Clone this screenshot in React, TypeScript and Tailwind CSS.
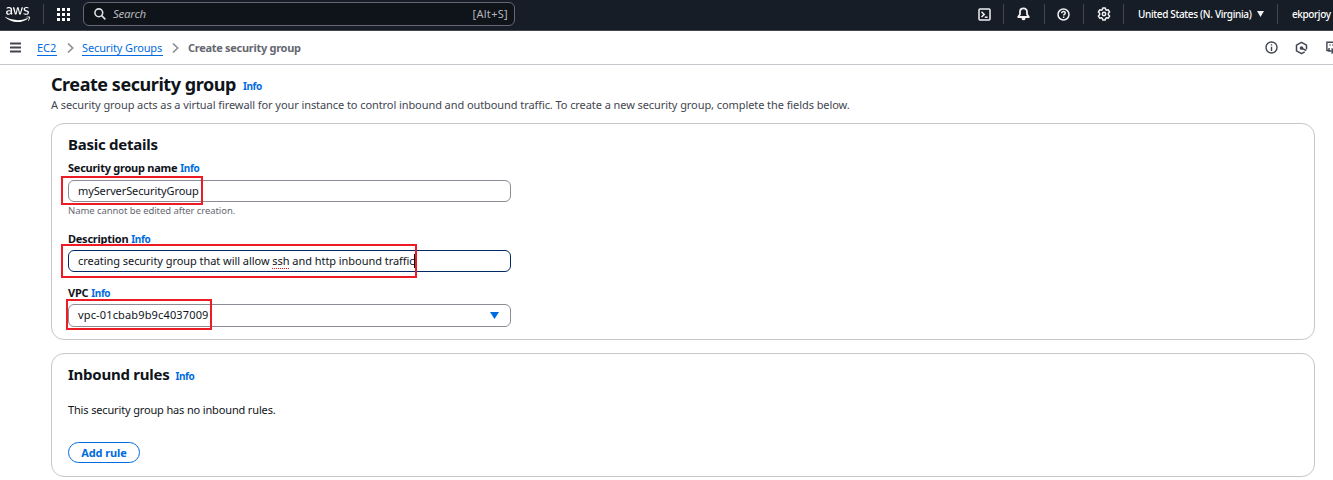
import type { ReactNode } from 'react';
import { FaAws } from 'react-icons/fa';

function Separator() {
  return <div className="h-[20px] w-px shrink-0 bg-[#424650]" />;
}

function Info() {
  return <a className="text-[10px] font-bold leading-[14px] tracking-[-0.4px] text-[#006ce0]">Info</a>;
}

function Chevron() {
  return (
    <svg className="h-[10px] w-[7px] shrink-0" viewBox="0 0 7 10" fill="none" stroke="#8c8c94" strokeWidth="1.6">
      <path d="M1 .5 5.7 5 1 9.5" />
    </svg>
  );
}

function Label({ children }: { children: ReactNode }) {
  return (
    <div className="flex h-[14px] items-center gap-[3px] whitespace-nowrap text-[11px] font-bold leading-[14px] tracking-[-0.25px]">
      <span>{children}</span>
      <Info />
    </div>
  );
}

function Mark({ className }: { className: string }) {
  return <div className={`pointer-events-none absolute border-2 border-[#ed1c24] ${className}`} />;
}

function TerminalIcon() {
  return (
    <svg className="h-[13px] w-[13px]" viewBox="0 0 13 13" fill="none" stroke="#f0f0f3" strokeWidth="1.5">
      <rect x="1" y="1" width="11" height="11" rx="1" />
      <path d="m3.5 3.8 2.7 2.6-2.7 2.6M6.8 9.3h2.8" />
    </svg>
  );
}

function BellIcon() {
  return (
    <svg className="h-[14px] w-[13px]" viewBox="0 0 13 14" fill="none" stroke="#f0f0f3" strokeWidth="1.8" strokeLinejoin="round">
      <path d="M6.5 1.4C4.400 1.400 3 2.800 3 4.700v2.500L1.200 10h10.600L10 7.200V4.700C10 2.800 8.600 1.400 6.500 1.400Z" />
      <path d="M4.600 10.500h3.800v.9a1.900 1.900 0 0 1-3.800 0Z" fill="#f0f0f3" stroke="none" />
    </svg>
  );
}

function HelpIcon() {
  return (
    <svg className="h-[13px] w-[13px]" viewBox="0 0 13 13" fill="none" stroke="#f0f0f3" strokeWidth="1.5">
      <circle cx="6.500" cy="6.500" r="5.500" />
      <path d="M4.700 5.300c0-1 .7-1.700 1.800-1.700s1.800.6 1.800 1.500c0 1.200-1.700 1.200-1.700 2.400" />
      <path d="M6.600 8.500v1.400" />
    </svg>
  );
}

function GearIcon() {
  return (
    <svg className="h-[14px] w-[14px]" viewBox="0 0 14 14" fill="none" stroke="#f0f0f3" strokeWidth="1.500" strokeLinejoin="round">
      <path d="M5.700 1.100h2.600l.4 1.600 1 .6 1.600-.5 1.300 2.200-1.200 1.200v1.600l1.200 1.200-1.300 2.200-1.600-.5-1 .6-.4 1.600H5.700l-.4-1.600-1-.6-1.600.5L1.400 9l1.200-1.200V6.200L1.400 5l1.300-2.200 1.600.5 1-.6Z" />
      <circle cx="7" cy="7" r="1.700" />
    </svg>
  );
}

function Header() {
  return (
    <header className="flex h-[31px] items-center whitespace-nowrap border-b border-[#424650] bg-[#161d26] pb-[2px] text-white">
      <FaAws className="ml-[5px] mt-px h-[25px] w-[25px] shrink-0" />
      <div className="ml-[13px]">
        <Separator />
      </div>
      <svg className="ml-[13px] h-[13px] w-[13px] shrink-0" viewBox="0 0 13 13" fill="#fff">
        {[0, 5, 10].map((y) => [0, 5, 10].map((x) => <rect key={`${x}-${y}`} x={x} y={y} width="3" height="3" />))}
      </svg>
      <div className="ml-[13px] flex h-[24px] w-[432px] shrink-0 items-center rounded-[6px] border border-[#656871] bg-[#0f141a] px-[10px] text-[#b4b4bb]">
        <svg className="h-[12px] w-[12px]" viewBox="0 0 12 12" fill="none" stroke="#dedee3" strokeWidth="1.6">
          <circle cx="4.8" cy="4.8" r="3.9" />
          <path d="m7.6 7.6 3.8 3.8" />
        </svg>
        <span className="ml-[7px] text-[11.5px] italic tracking-[-0.25px]">Search</span>
        <span className="-mr-[4px] ml-auto text-[11px] tracking-[0.3px]">[Alt+S]</span>
      </div>
      <div className="ml-auto flex w-[356px] shrink-0 items-center">
        <div className="flex w-[26px] items-center pl-px">
          <TerminalIcon />
        </div>
        <Separator />
        <div className="flex w-[40px] items-center justify-center pr-px">
          <BellIcon />
        </div>
        <Separator />
        <div className="flex w-[38px] items-center justify-center pr-px">
          <HelpIcon />
        </div>
        <Separator />
        <div className="flex w-[39px] items-center justify-center pl-px">
          <GearIcon />
        </div>
        <Separator />
        <div className="flex w-[153px] items-center pl-[14px]">
          <span className="text-[10px] font-medium tracking-[-0.34px]">United States (N. Virginia)</span>
          <svg className="ml-[5px] h-[6px] w-[7px]" viewBox="0 0 7 6" fill="#f0f0f3">
            <path d="M0 0h7L3.500 6Z" />
          </svg>
        </div>
        <Separator />
        <span className="ml-[14px] text-[10px] font-medium tracking-[-0.4px]">ekporjoy</span>
      </div>
    </header>
  );
}

function Breadcrumbs() {
  return (
    <nav className="flex h-[34px] items-center whitespace-nowrap border-b border-[#c6c6cd] pl-[10px]">
      <svg className="h-[12px] w-[11px] shrink-0" viewBox="0 0 11 12" fill="#424650">
        <path d="M0 .6h11v1.800H0zM0 4.600h11v1.800H0zM0 8.600h11v1.800H0z" />
      </svg>
      <a className="ml-[16px] mt-px w-[20px] border-b border-[#006ce0] leading-[14px] text-[#006ce0]">EC2</a>
      <div className="ml-[10px] mr-[8px]">
        <Chevron />
      </div>
      <a className="mt-px w-[81px] border-b border-[#006ce0] leading-[14px] tracking-[-0.12px] text-[#006ce0]">Security Groups</a>
      <div className="ml-[9px] mr-[8px]">
        <Chevron />
      </div>
      <span className="ml-px mt-px font-bold tracking-[-0.29px] text-[#656871]">Create security group</span>
      <div className="ml-auto flex w-[68px] shrink-0 items-center">
        <svg className="h-[13px] w-[13px] shrink-0" viewBox="0 0 13 13" fill="none" stroke="#424650" strokeWidth="1.400">
          <circle cx="6.500" cy="6.500" r="5.500" />
          <path d="M6.500 5.700V10M6.500 3.200v1.400" />
        </svg>
        <svg className="ml-[17px] h-[14px] w-[13px] shrink-0" viewBox="0 0 13 14" fill="none" stroke="#424650" strokeWidth="1.500" strokeLinejoin="round">
          <path d="M11.500 8.300V4.100l-5-2.800-5 2.800v5.800l5 2.800 3.200-1.800" />
          <circle cx="6.500" cy="7" r="1.100" fill="#424650" />
          <path d="m7 7.300 4.300 2.200" />
        </svg>
        <svg className="ml-[18px] h-[14px] w-[14px] shrink-0" viewBox="0 0 14 14" fill="none" stroke="#424650" strokeWidth="1.400">
          <path d="M4 9.500H.9V1.200h11.200V5M3.500 4h1M6.300 4h1" />
          <path d="M3 7v3h4.500M5.500 7.500 8 10l-2.500 2.500" />
        </svg>
      </div>
    </nav>
  );
}

export default function App() {
  return (
    <div className="h-[480px] w-[1333px] overflow-hidden bg-white font-['Noto_Sans',sans-serif] text-[11px] text-[#0f141a]">
      <Header />
      <Breadcrumbs />
      <main className="pl-[51px] pr-[18px] pt-[6px]">
        <div className="flex h-[26px] items-center gap-[7px] whitespace-nowrap">
          <h1 className="-mt-px text-[18px] font-bold leading-[26px] tracking-[-0.45px]">Create security group</h1>
          <div className="mt-[3px] flex">
            <Info />
          </div>
        </div>
        <p className="h-[26px] whitespace-nowrap pt-px leading-[14px] tracking-[-0.077px] text-[#424650]">
          A security group acts as a virtual firewall for your instance to control inbound and outbound traffic. To create a
          new security group, complete the fields below.
        </p>

        <section className="relative h-[217px] rounded-[13px] border border-[#c6c6cd] px-[16px] pt-[10px]">
          <h2 className="text-[15px] font-bold leading-[20px] tracking-[-0.25px]">Basic details</h2>
          <div className="mt-[7px]">
            <Label>Security group name</Label>
            <div className="mt-[5px] flex h-[22px] w-[443px] items-center rounded-[6px] border border-[#8c8c94] px-[9px] tracking-[-0.11px]">
              myServerSecurityGroup
            </div>
            <div className="mt-[2px] text-[9.5px] leading-[13px] tracking-[-0.07px] text-[#656871]">
              Name cannot be edited after creation.
            </div>
          </div>
          <div className="mt-[15px]">
            <Label>Description</Label>
            <div className="mt-[4px] flex h-[22px] w-[443px] items-center whitespace-pre rounded-[6px] border border-[#002b66] px-[9px] tracking-[-0.05px]">
              <span>creating security group that will allow </span>
              <span className="underline decoration-[#ed1c24] decoration-dotted decoration-1 underline-offset-[3px]">ssh</span>
              <span> and http inbound traffic</span>
              <span className="-ml-px h-[14px] w-px bg-black" />
            </div>
          </div>
          <div className="mt-[14px]">
            <Label>VPC</Label>
            <div className="mt-[4px] flex h-[23px] w-[443px] items-center justify-between rounded-[6px] border border-[#8c8c94] pl-[9px] pr-[11px] tracking-[0.15px]">
              vpc-01cbab9b9c4037009
              <svg className="h-[7px] w-[9px]" viewBox="0 0 9 7" fill="#006ce0">
                <path d="M0 0h9L4.500 7Z" />
              </svg>
            </div>
          </div>
          <Mark className="left-[9px] top-[52px] h-[29px] w-[142px]" />
          <Mark className="left-[9px] top-[120px] h-[34px] w-[356px]" />
          <Mark className="left-[14px] top-[175px] h-[31px] w-[146px]" />
        </section>

        <section className="mt-[13px] h-[124px] rounded-[13px] border border-[#c6c6cd] px-[16px] pt-[10px]">
          <div className="flex h-[20px] items-center gap-[6px]">
            <h2 className="text-[15px] font-bold leading-[20px] tracking-[-0.25px]">Inbound rules</h2>
            <div className="mt-[4px] flex">
              <Info />
            </div>
          </div>
          <p className="mt-[19px] leading-[14px] tracking-[-0.15px]">This security group has no inbound rules.</p>
          <button className="mt-[25px] flex h-[21px] w-[72px] items-center justify-center rounded-full border border-[#006ce0] pt-px font-bold tracking-[-0.1px] text-[#006ce0]">
            Add rule
          </button>
        </section>
      </main>
    </div>
  );
}
